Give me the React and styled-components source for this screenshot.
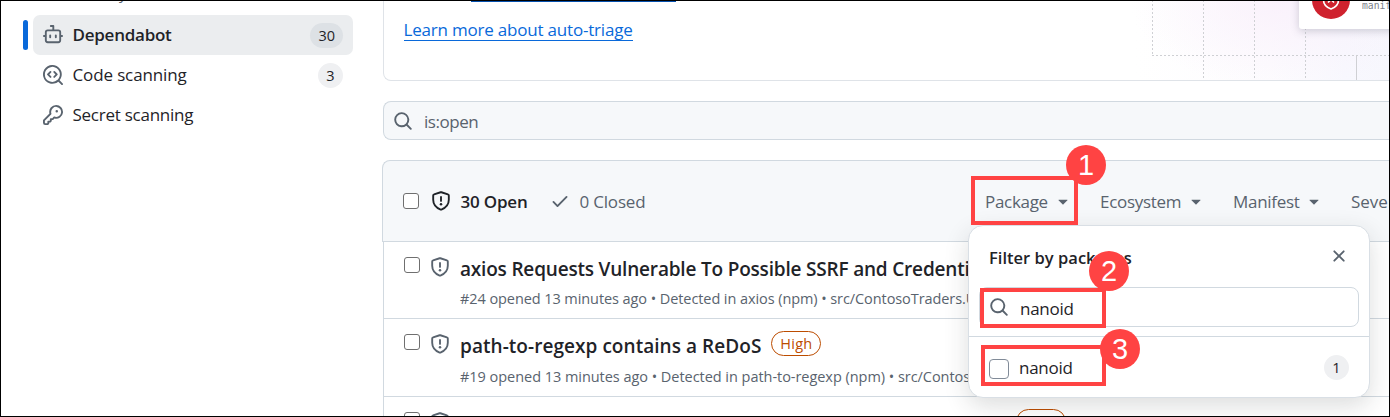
import React from "react";
import styled, { createGlobalStyle } from "styled-components";

const Global = createGlobalStyle`
  * { box-sizing: border-box; }
  body { margin: 0; background: #fff; }
`;

const Frame = styled.div`
  position: relative;
  display: flex;
  width: 1390px;
  height: 417px;
  overflow: hidden;
  background: #fff;
  color: #1f2328;
  font-family: "Open Sans", "Noto Sans", sans-serif;
  font-size: 17px;
  white-space: nowrap;
  &::after {
    content: "";
    position: absolute;
    inset: 0;
    border: 1px solid #000;
    z-index: 10;
    pointer-events: none;
  }
`;

const Label = styled.span`
  font-size: ${(p) => p.$size || 17}px;
  font-weight: ${(p) => p.$weight || 400};
  letter-spacing: ${(p) => p.$track || 0}px;
  color: ${(p) => p.$color || "inherit"};
  line-height: 1.4;
`;

const Svg = styled.svg`
  display: block;
  flex: none;
  fill: ${(p) => p.$color || "#59636e"};
`;

const PATHS = {
  search: ["M10.68 11.74a6 6 0 0 1-7.922-8.982 6 6 0 0 1 8.982 7.922l3.04 3.04a.749.749 0 0 1-.326 1.275.749.749 0 0 1-.734-.215ZM11.5 7a4.499 4.499 0 1 0-8.997 0A4.499 4.499 0 0 0 11.5 7Z"],
  bot: [
    "M5.75 7.5a.75.75 0 0 1 .75.75v1.5a.75.75 0 0 1-1.5 0v-1.5a.75.75 0 0 1 .75-.75Zm5.25.75a.75.75 0 0 0-1.5 0v1.5a.75.75 0 0 0 1.5 0v-1.5Z",
    "M6.25 0h2A.75.75 0 0 1 9 .75V3.5h3.25a2.25 2.25 0 0 1 2.25 2.25V8h.75a.75.75 0 0 1 0 1.5h-.75v2.75a2.25 2.25 0 0 1-2.25 2.25h-8.5a2.25 2.25 0 0 1-2.25-2.25V9.5H.75a.75.75 0 0 1 0-1.5h.75V5.75A2.25 2.25 0 0 1 3.75 3.5H7.5v-2H6.25a.75.75 0 0 1 0-1.5ZM3 5.75v6.5c0 .414.336.75.75.75h8.5a.75.75 0 0 0 .75-.75v-6.5a.75.75 0 0 0-.75-.75h-8.5a.75.75 0 0 0-.75.75Z",
  ],
  codescan: [
    "M8.47 4.97a.75.75 0 0 0 0 1.06L9.94 7.5 8.47 8.97a.75.75 0 1 0 1.06 1.06l2-2a.75.75 0 0 0 0-1.06l-2-2a.75.75 0 0 0-1.06 0ZM6.53 6.03a.75.75 0 0 0-1.06-1.06l-2 2a.75.75 0 0 0 0 1.06l2 2a.75.75 0 1 0 1.06-1.06L5.06 7.5l1.47-1.47Z",
    "M12.246 13.307a7.501 7.501 0 1 1 1.06-1.06l2.474 2.473a.749.749 0 0 1-.326 1.275.749.749 0 0 1-.734-.215ZM1.5 7.5a6.002 6.002 0 0 0 3.608 5.504 6.002 6.002 0 0 0 6.486-1.117.748.748 0 0 1 .292-.293A6 6 0 1 0 1.5 7.5Z",
  ],
  key: ["M10.5 0a5.499 5.499 0 1 1-1.288 10.848l-.932.932a.749.749 0 0 1-.53.22H7v.75a.749.749 0 0 1-.22.53l-.5.5a.749.749 0 0 1-.53.22H5v.75a.749.749 0 0 1-.22.53l-.5.5a.749.749 0 0 1-.53.22h-2A1.75 1.75 0 0 1 0 14.25v-2c0-.199.079-.389.22-.53l4.932-4.932A5.5 5.5 0 0 1 10.5 0Zm-4 5.5c-.001.431.069.86.205 1.269a.75.75 0 0 1-.181.768L1.5 12.56v1.69c0 .138.112.25.25.25h1.69l.06-.06v-1.19a.75.75 0 0 1 .75-.75h1.19l.06-.06v-1.19a.75.75 0 0 1 .75-.75h1.19l1.023-1.025a.75.75 0 0 1 .768-.18A4 4 0 1 0 6.5 5.5ZM11 6a1 1 0 1 1 0-2 1 1 0 0 1 0 2Z"],
  close: ["M3.72 3.72a.75.75 0 0 1 1.06 0L8 6.94l3.22-3.22a.749.749 0 0 1 1.275.326.749.749 0 0 1-.215.734L9.06 8l3.22 3.22a.749.749 0 0 1-.326 1.275.749.749 0 0 1-.734-.215L8 9.06l-3.22 3.22a.751.751 0 0 1-1.042-.018.751.751 0 0 1-.018-1.042L6.94 8 3.72 4.78a.75.75 0 0 1 0-1.06Z"],
  check: ["M13.78 4.22a.75.75 0 0 1 0 1.06l-7.25 7.25a.75.75 0 0 1-1.06 0L2.22 9.28a.751.751 0 0 1 .018-1.042.751.751 0 0 1 1.042-.018L6 10.94l6.72-6.72a.75.75 0 0 1 1.06 0Z"],
  caret: ["m4.427 7.427 3.396 3.396a.25.25 0 0 0 .354 0l3.396-3.396A.25.25 0 0 0 11.396 7H4.604a.25.25 0 0 0-.177.427Z"],
};

const Icon = ({ name, size = 20, color }) => (
  <Svg width={size} height={size} viewBox="0 0 16 16" $color={color}>
    {PATHS[name].map((d) => <path key={d} d={d} fillRule="evenodd" />)}
  </Svg>
);

const Shield = ({ color = "#59636e" }) => (
  <Svg width="20" height="20" viewBox="0 0 16 16" $color="none">
    <path d="M7.7 1a1 1 0 0 1 .6 0l5.25 1.68a.95.95 0 0 1 .7.91V7c0 3.4-2.15 6.3-5.95 7.85a.9.9 0 0 1-.6 0C3.9 13.3 1.75 10.4 1.75 7V3.59a.95.95 0 0 1 .7-.91Z" stroke={color} strokeWidth="1.5" fill="none" />
    <path d="M8 4.7v3.2" stroke={color} strokeWidth="1.5" strokeLinecap="round" />
    <circle cx="8" cy="10.6" r="1" fill={color} />
  </Svg>
);

const Sidebar = styled.nav`
  flex: none;
  width: 382px;
  padding: 15px 29px 0 23px;
  position: relative;
`;
const CutDescender = styled.span`
  position: absolute;
  left: 119px;
  top: -17px;
  color: #59636e;
  font-size: 15px;
  line-height: 20px;
`;
const NavItem = styled.div`
  display: flex;
  align-items: center;
  height: 40px;
`;
const Marker = styled.i`
  width: 5px;
  height: 30px;
  margin-right: 5px;
  border-radius: 3px;
  background: ${(p) => (p.$active ? "#0969da" : "transparent")};
`;
const NavBody = styled.div`
  flex: 1;
  display: flex;
  align-items: center;
  gap: 9.5px;
  height: 40px;
  padding: 0 10px;
  border-radius: 7px;
  background: ${(p) => (p.$active ? "#ebedef" : "transparent")};
`;
const Count = styled.span`
  display: flex;
  align-items: center;
  justify-content: center;
  min-width: 25px;
  height: 25px;
  padding: 0 8px;
  margin-left: auto;
  border-radius: 13px;
  background: ${(p) => (p.$dark ? "#dde1e5" : "#eff0f2")};
  font-size: 14.5px;
  font-weight: 500;
`;

const Main = styled.main`
  flex: 1;
  min-width: 0;
  overflow: hidden;
  display: flex;
  flex-direction: column;
`;
const Hero = styled.section`
  position: relative;
  flex: none;
  height: 81px;
  margin-left: 1px;
  border: 1px solid #dfe3e8;
  border-width: 0 0 1px 1px;
  border-radius: 0 0 0 8px;
  padding: 17px 0 0 19.5px;
  overflow: hidden;
`;
const Art = styled.div`
  position: absolute;
  right: 0;
  top: 0;
  width: 300px;
  height: 80px;
  background:
    radial-gradient(ellipse 150px 90px at 190px 0, rgba(249, 239, 251, 0.8), rgba(250, 242, 252, 0) 100%),
    linear-gradient(90deg, #fff 15%, #fdfcfe 60%, #f8f8fe 85%, #f7f7fd 100%);
`;
const ArtGrid = styled.svg`
  position: absolute;
  inset: 0;
  stroke: #cfd0d4;
  stroke-dasharray: 2 2;
  fill: none;
`;
const AlertCard = styled.div`
  position: absolute;
  left: 209px;
  top: -30px;
  width: 120px;
  height: 59px;
  border-radius: 3px;
  background: #fff;
  box-shadow: 0 2px 9px rgba(70, 75, 95, 0.25);
`;
const AlertText = styled.span`
  position: absolute;
  left: 63px;
  top: 29px;
  font: 9.7px/14px "DejaVu Sans Mono", monospace;
  color: #7d828b;
`;
const AlertBadge = styled.svg`
  position: absolute;
  left: 13px;
  top: 11px;
`;
const HeroLink = styled.a`
  display: inline-block;
  height: 24px;
  border-bottom: 1px solid #0969da;
  color: #0969da;
  line-height: 25px;
`;
const CutLink = styled.i`
  position: absolute;
  left: 87px;
  top: 0;
  width: 205px;
  height: 2px;
  background: #0550ae;
`;
const SearchBar = styled.div`
  display: flex;
  align-items: center;
  flex: none;
  gap: 11px;
  height: 39px;
  margin: 20px 0 20px 1px;
  padding-left: 9px;
  border: 1px solid #d1d9e0;
  border-right: 0;
  border-radius: 8px 0 0 8px;
  background: #f6f8fa;
  & > span { padding-top: 2px; }
`;
const Toolbar = styled.header`
  display: flex;
  align-items: center;
  flex: none;
  height: 82px;
  padding-left: 20px;
  border: 1px solid #d1d9e0;
  border-right: 0;
  border-radius: 8px 0 0 0;
  background: #f6f8fa;
`;
const Box = styled.i`
  flex: none;
  width: ${(p) => p.$size || 16}px;
  height: ${(p) => p.$size || 16}px;
  border: 1px solid ${(p) => p.$color || "#6f6f6f"};
  border-radius: ${(p) => (p.$size ? 4 : 3)}px;
  background: #fff;
`;
const Tab = styled.div`
  display: flex;
  align-items: center;
  gap: ${(p) => p.$gap}px;
  margin-left: ${(p) => p.$left}px;
  & > span { padding-top: 2px; }
`;
const Filters = styled.div`
  display: flex;
  margin-left: auto;
  width: 405px;
  flex: none;
`;
const Filter = styled.div`
  flex: none;
  display: flex;
  align-items: center;
  justify-content: space-between;
  width: ${(p) => p.$width}px;
  margin-right: 27px;
  color: #59636e;
  & > span { padding-top: 2px; }
`;
const Row = styled.article`
  flex: none;
  display: flex;
  height: 78px;
  margin-left: 1px;
  padding: 15px 0 0 19.5px;
  border-left: 1px solid #d1d9e0;
  border-bottom: 1px solid #d1d9e0;
  &:nth-of-type(1) { height: 77px; }
  & > svg { margin-left: 10.500px; }
`;
const RowText = styled.div`
  display: flex;
  flex-direction: column;
  margin-left: 10px;
`;
const Title = styled.h3`
  display: flex;
  align-items: center;
  gap: 10px;
  margin: -3px 0 0;
  height: 30px;
`;
const Meta = styled.p`
  margin: ${(p) => p.$top || 3}px 0 0;
  height: 26px;
  line-height: 22px;
`;
const Severity = styled.span`
  display: inline-flex;
  align-items: center;
  justify-content: center;
  width: 50px;
  height: 25px;
  border: 1px solid #bc4c00;
  border-radius: 13px;
  color: #bc4c00;
  font-size: 14.5px;
  font-weight: 500;
  letter-spacing: 0.3px;
  position: relative;
  top: -3px;
  margin-left: ${(p) => p.$left || 0}px;
`;

const Popover = styled.aside`
  position: absolute;
  z-index: 3;
  left: 968px;
  top: 225px;
  width: 402px;
  height: 173px;
  border: 1px solid #d9dfe5;
  border-radius: 15px;
  background: #fff;
  box-shadow: 0 8px 24px rgba(37, 41, 46, 0.16);
`;
const PopHead = styled.div`
  display: flex;
  align-items: center;
  justify-content: space-between;
  height: 61px;
  padding: 2px 20px 0;
  & > svg { position: relative; top: -2px; }
`;
const PopSearch = styled.div`
  display: flex;
  align-items: center;
  gap: 11px;
  height: 40px;
  margin: 0 10px 9px;
  padding-left: 9px;
  border: 1px solid #d1d9e0;
  border-radius: 8px;
  & > span { padding-top: 3px; }
`;
const Option = styled.div`
  display: flex;
  align-items: center;
  gap: 10px;
  height: 60px;
  padding: 2px 20px 0;
  border-top: 1px solid #d1d9e0;
  & > i { position: relative; top: 1px; }
`;
const Highlight = styled.i`
  position: absolute;
  z-index: 5;
  left: ${(p) => p.$x}px;
  top: ${(p) => p.$y}px;
  width: ${(p) => p.$w}px;
  height: ${(p) => p.$h}px;
  border: 4px solid #ff4343;
`;
const Step = styled.b`
  position: absolute;
  z-index: 6;
  display: flex;
  align-items: center;
  justify-content: center;
  left: ${(p) => p.$x}px;
  top: ${(p) => p.$y}px;
  width: 40px;
  height: 40px;
  border-radius: 50%;
  background: #ff4343;
  color: #fff;
  font: 400 29px/40px "Liberation Sans", Arial, sans-serif;
`;

const NAV = [
  { icon: "bot", text: "Dependabot", count: 30, active: true, weight: 600, track: -0.25 },
  { icon: "codescan", text: "Code scanning", count: 3, track: -0.13 },
  { icon: "key", text: "Secret scanning", track: -0.25 },
];
const FILTERS = [
  ["Package", 84, -0.3], ["Ecosystem", 102, -0.3], ["Manifest", 87, -0.3],
];

export default function App() {
  return (
    <Frame>
      <Global />
      <Sidebar>
        <CutDescender>y</CutDescender>
        {NAV.map((n) => (
          <NavItem key={n.text}>
            <Marker $active={n.active} />
            <NavBody $active={n.active}>
              <Icon name={n.icon} />
              <Label $weight={n.weight} $track={n.track}>{n.text}</Label>
              {n.count && <Count $dark={n.active}>{n.count}</Count>}
            </NavBody>
          </NavItem>
        ))}
      </Sidebar>
      <Main>
        <Hero>
          <Art>
            <ArtGrid width="300" height="80">
              <path d="M62.5 0V55M113.5 0V80M164.5 0V80M215.5 0V80M62 55.5H300" />
              <path d="M266.5 56V80" strokeDasharray="none" />
            </ArtGrid>
            <AlertCard>
              <AlertBadge width="38" height="38" viewBox="0 0 38 38">
                <circle cx="19" cy="19" r="19" fill="#cf222e" />
                <path d="M11.5 12 19 9l7.5 3v7c0 4.500-3 7.300-7.500 9-4.500-1.700-7.500-4.500-7.500-9Z" stroke="#fff" strokeWidth="1.7" fill="none" strokeLinejoin="round" />
                <path d="M16.500 16l5 5M21.500 16l-5 5" stroke="#fff" strokeWidth="1.7" fill="none" strokeLinecap="round" />
              </AlertBadge>
              <AlertText>manifest</AlertText>
            </AlertCard>
          </Art>
          <CutLink />
          <HeroLink><Label $track={-0.2}>Learn more about auto-triage</Label></HeroLink>
        </Hero>
        <SearchBar>
          <Icon name="search" />
          <Label $color="#59636e" $track={-0.45}>is:open</Label>
        </SearchBar>
        <Toolbar>
          <Box />
          <Tab $gap={9.5} $left={12}>
            <Shield color="#1f2328" />
            <Label $weight={600} $track={-0.2}>30 Open</Label>
          </Tab>
          <Tab $gap={10} $left={22}>
            <Icon name="check" />
            <Label $color="#59636e" $track={-0.2}>0 Closed</Label>
          </Tab>
          <Filters>
            {FILTERS.map(([t, w, track]) => (
              <Filter key={t} $width={w + 4}>
                <Label $track={track}>{t}</Label>
                <Icon name="caret" />
              </Filter>
            ))}
            <Filter><Label>Severity</Label></Filter>
          </Filters>
        </Toolbar>
        <Row>
          <Box />
          <Shield />
          <RowText>
            <Title><Label $size={19} $weight={600} $track={-0.19}>axios Requests Vulnerable To Possible SSRF and Credential Leakage</Label></Title>
            <Meta><Label $size={14.5} $color="#59636e" $track={-0.08}>#24 opened 13 minutes ago • Detected in axios (npm) • src/ContosoTraders.Ui.Website</Label></Meta>
          </RowText>
        </Row>
        <Row>
          <Box />
          <Shield />
          <RowText>
            <Title><Label $size={19} $weight={600} $track={0.05}>path-to-regexp contains a ReDoS</Label><Severity>High</Severity></Title>
            <Meta $top={4}><Label $size={14.5} $color="#59636e" $track={-0.04}>#19 opened 13 minutes ago • Detected in path-to-regexp (npm) • src/ContosoTraders.Ui.Website</Label></Meta>
          </RowText>
        </Row>
        <Row>
          <Box />
          <Shield />
          <RowText><Title><Severity $left={556} /></Title></RowText>
        </Row>
      </Main>
      <Popover>
        <PopHead>
          <Label $size={16.5} $weight={600} $track={0.02}>Filter by packages</Label>
          <Icon name="close" />
        </PopHead>
        <PopSearch>
          <Icon name="search" />
          <Label $track={-0.25}>nanoid</Label>
        </PopSearch>
        <Option>
          <Box $size={20} $color="#818b98" />
          <Label $track={-0.25}>nanoid</Label>
          <Count>1</Count>
        </Option>
      </Popover>
      <Highlight $x={971} $y={176} $w={107} $h={49} />
      <Highlight $x={980} $y={288} $w={126} $h={40} />
      <Highlight $x={981} $y={345} $w={125} $h={41} />
      <Step $x={1066} $y={145}>1</Step>
      <Step $x={1089} $y={251}>2</Step>
      <Step $x={1100} $y={329}>3</Step>
    </Frame>
  );
}
